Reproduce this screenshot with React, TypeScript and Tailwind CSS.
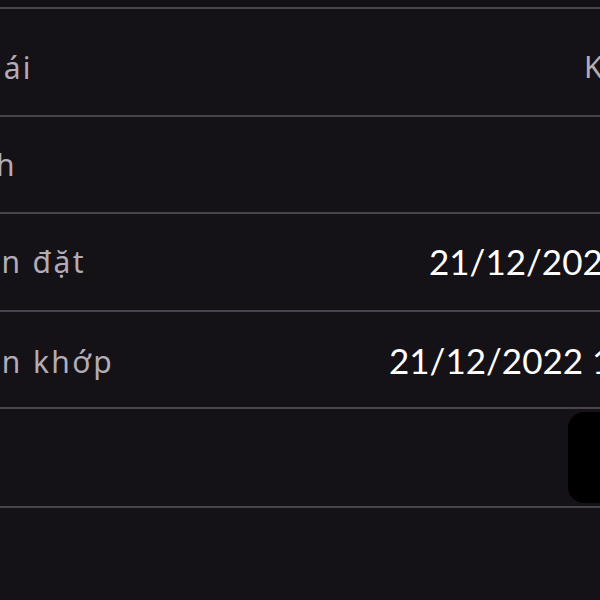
export default function App() {
  const label = "font-['Noto_Sans','Lato',sans-serif] text-[30px] tracking-[2.4px] text-[#b3acb6] leading-none";
  const value = "font-['Lato','Open_Sans',sans-serif] text-[35px] text-white leading-none";
  return (
    <div className="w-[600px] h-[600px] overflow-hidden bg-[#141216] flex flex-col">
      <div className="h-[7px] shrink-0 bg-[#120f15]" />
      {/* Trạng thái */}
      <div className="h-[108px] shrink-0 border-t-2 border-[#48434d] flex items-center pt-3">
        <div className="w-[33px] shrink-0 flex justify-end whitespace-nowrap">
          <span className={label}>Trạng thái</span>
        </div>
        <div className="flex-1" />
        <div className="w-[16px] shrink-0 whitespace-nowrap">
          <span className={label}>Khớp hết</span>
        </div>
      </div>
      {/* Kênh */}
      <div className="h-[97px] shrink-0 border-t-2 border-[#48434d] flex items-center">
        <div className="w-[17px] shrink-0 flex justify-end whitespace-nowrap">
          <span className={label}>Kênh</span>
        </div>
      </div>
      {/* Thời gian đặt */}
      <div className="h-[98px] shrink-0 border-t-2 border-[#48434d] flex items-center">
        <div className="w-[86px] shrink-0 flex justify-end whitespace-nowrap">
          <span className={label}>Thời gian đặt</span>
        </div>
        <div className="flex-1" />
        <div className="w-[171px] shrink-0 whitespace-nowrap">
          <span className={value}>21/12/2022 10:15:32</span>
        </div>
      </div>
      {/* Thời gian khớp */}
      <div className="h-[97px] shrink-0 border-t-2 border-[#48434d] flex items-center pt-1">
        <div className="w-[114px] shrink-0 flex justify-end whitespace-nowrap">
          <span className={label}>Thời gian khớp</span>
        </div>
        <div className="flex-1" />
        <div className="w-[211px] shrink-0 whitespace-nowrap">
          <span className={value}>21/12/2022 10:15:33</span>
        </div>
      </div>
      {/* action row */}
      <div className="h-[99px] shrink-0 border-t-2 border-[#48434d] flex items-center justify-end">
        <div className="w-[60px] h-[91px] mr-[-28px] rounded-[16px] bg-black" />
      </div>
      <div className="flex-1 border-t-2 border-[#48434d]" />
    </div>
  );
}
